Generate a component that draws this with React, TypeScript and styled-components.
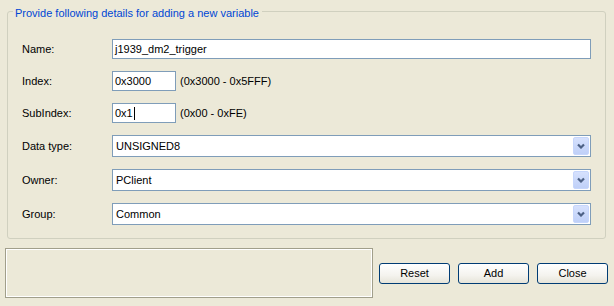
import React from 'react'
import styled, { createGlobalStyle } from 'styled-components'

const GlobalStyle = createGlobalStyle`
    html, body {
        margin:0;
        padding:0;
        background:#ECE9D8;
    }
    body {
        font-family: "Liberation Sans", Arial, sans-serif;
        font-size:11px;
        color:#000;
    }
`

const Page = styled.div`
    width:614px;
    height:306px;
    box-sizing:border-box;
    padding:0 5px 0 5px;
    overflow:hidden;
`

const GroupBox = styled.fieldset`
    margin:2px 3px 0 2px;
    padding:19px 14px 13px 14px;
    border:1px solid #D0D0BF;
    border-radius:3px;
    min-width:0;
`

const Legend = styled.legend`
    padding:4px 3px 0 2px;
    margin-left:-9px;
    line-height:14px;
    color:#0046D5;
`

const Rows = styled.div`
    display:flex;
    flex-direction:column;
    gap:12px;
`

const Row = styled.div`
    display:flex;
    align-items:center;
`

const Label = styled.span`
    width:90px;
    flex:none;
`

const TextBox = styled.div<{ $width?: number }>`
    box-sizing:border-box;
    height:20px;
    width:${p => p.$width ? `${p.$width}px` : 'auto'};
    flex:${p => p.$width ? 'none' : '1'};
    border:1px solid #7F9DB9;
    background:#fff;
    padding:0 2px;
    display:flex;
    align-items:center;
`

const Caret = styled.span`
    display:inline-block;
    width:1px;
    height:13px;
    background:#000;
    margin-left:1px;
`

const Hint = styled.span`
    margin-left:4px;
`

const Combo = styled.div`
    box-sizing:border-box;
    flex:1;
    height:22px;
    border:1px solid #7F9DB9;
    background:#fff;
    padding:1px 1px 1px 3px;
    display:flex;
    align-items:center;
    justify-content:space-between;
`

const ComboButton = styled.div`
    width:16px;
    height:18px;
    box-sizing:border-box;
    border:1px solid #C6D6FC;
    border-radius:2px;
    background:linear-gradient(#D6E1FD, #BFD0F8);
    display:flex;
    align-items:center;
    justify-content:center;
`

const Footer = styled.div`
    display:flex;
    align-items:center;
    margin-top:9px;
`

const StatusBox = styled.div`
    width:368px;
    height:50px;
    box-sizing:border-box;
    border:1px solid #A19F8B;
    box-shadow:inset 0 0 0 1px #fff;
    margin-right:6px;
`

const Buttons = styled.div`
    display:flex;
    gap:8px;
`

const Button = styled.button`
    width:71px;
    height:21px;
    box-sizing:border-box;
    border:1px solid #003C74;
    border-radius:3px;
    background:linear-gradient(#FFFFFF 0%, #F4F3EE 60%, #E6E4D9 100%);
    font-family:"Liberation Sans", Arial, sans-serif;
    font-size:11px;
    color:#000;
    padding:0;
`

const Chevron = () => (
    <svg width="8" height="6" viewBox="0 0 8 6">
        <polyline points="1,1.5 4,4.5 7,1.5" fill="none" stroke="#4D6185" strokeWidth="2.2" />
    </svg>
)

const App = () => {
    return (
        <React.Fragment>
            <GlobalStyle />
            <Page>
                <GroupBox>
                    <Legend>Provide following details for adding a new variable</Legend>
                    <Rows>
                        <Row>
                            <Label>Name:</Label>
                            <TextBox>j1939_dm2_trigger</TextBox>
                        </Row>
                        <Row>
                            <Label>Index:</Label>
                            <TextBox $width={64}>0x3000</TextBox>
                            <Hint>(0x3000 - 0x5FFF)</Hint>
                        </Row>
                        <Row>
                            <Label>SubIndex:</Label>
                            <TextBox $width={64}>0x1<Caret /></TextBox>
                            <Hint>(0x00 - 0xFE)</Hint>
                        </Row>
                        <Row>
                            <Label>Data type:</Label>
                            <Combo>UNSIGNED8<ComboButton><Chevron /></ComboButton></Combo>
                        </Row>
                        <Row>
                            <Label>Owner:</Label>
                            <Combo>PClient<ComboButton><Chevron /></ComboButton></Combo>
                        </Row>
                        <Row>
                            <Label>Group:</Label>
                            <Combo>Common<ComboButton><Chevron /></ComboButton></Combo>
                        </Row>
                    </Rows>
                </GroupBox>
                <Footer>
                    <StatusBox />
                    <Buttons>
                        <Button>Reset</Button>
                        <Button>Add</Button>
                        <Button>Close</Button>
                    </Buttons>
                </Footer>
            </Page>
        </React.Fragment>
    )
}

export default App
